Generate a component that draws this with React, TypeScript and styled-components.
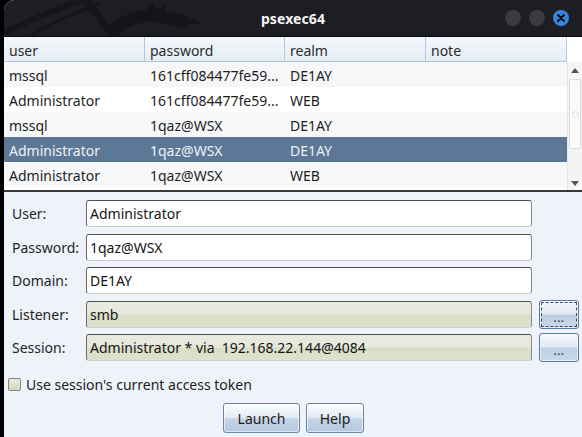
import React from "react";
import styled, { createGlobalStyle } from "styled-components";

const GlobalStyle = createGlobalStyle`
  html, body { margin: 0; padding: 0; background: #000; }
  body { font-family: "Noto Sans", "DejaVu Sans", sans-serif; }
  * { box-sizing: border-box; }
`;

const Screen = styled.div`
  width: 582px;
  height: 437px;
  padding-left: 4px;
  background: #000;
  display: flex;
  overflow: hidden;
`;

const Window = styled.div`
  flex: 1;
  display: flex;
  flex-direction: column;
  background: #eef2f9;
  border-top-left-radius: 10px;
  overflow: hidden;
`;

const TitleBar = styled.div`
  position: relative;
  flex: none;
  height: 37px;
  background: #1d1e23;
  border-bottom: 1px solid #0b0b0d;
  display: grid;
  grid-template-columns: 1fr auto 1fr;
  align-items: center;
`;

const Dragon = styled.svg`
  position: absolute;
  left: 0;
  top: 0;
  width: 220px;
  height: 36px;
`;

const Title = styled.div`
  grid-column: 2;
  position: relative;
  color: #f4f4f4;
  font-weight: 700;
  font-size: 14px;
  letter-spacing: 0.1px;
`;

const Controls = styled.div`
  grid-column: 3;
  justify-self: end;
  display: flex;
  gap: 8px;
  padding-right: 13px;
  position: relative;
`;

const Circle = styled.div<{ $close?: boolean }>`
  width: 16px;
  height: 16px;
  border-radius: 50%;
  background: ${(p) => (p.$close ? "#3584e4" : "#3a3b43")};
  display: flex;
  align-items: center;
  justify-content: center;
`;

const TableArea = styled.div`
  flex: none;
  height: 155px;
  display: flex;
  background: #fff;
  border-bottom: 2px solid #3a3a3c;
`;

const TableMain = styled.div`
  width: 563px;
  display: flex;
  flex-direction: column;
`;

const cols = "141px 140px 141px 141px";

const Header = styled.div`
  display: grid;
  grid-template-columns: ${cols};
  height: 25px;
  background: linear-gradient(#f5f8fc, #e5ecf6);
  border-bottom: 1px solid #b3c4d9;
`;

const HeaderCell = styled.div`
  display: flex;
  align-items: center;
  padding: 2px 0 0 5px;
  font-size: 14px;
  color: #2a2a2a;
  border-right: 1px solid #b4c8e0;
`;

const Row = styled.div<{ $variant: "odd" | "even" | "sel" }>`
  display: grid;
  grid-template-columns: ${cols};
  height: 25px;
  background: ${(p) =>
    p.$variant === "sel" ? "#5d7896" : p.$variant === "odd" ? "#f6f7f9" : "#ffffff"};
  color: ${(p) => (p.$variant === "sel" ? "#eef2f6" : "#1e1e1e")};
`;

const Cell = styled.div`
  display: flex;
  align-items: center;
  padding: 2px 0 0 5px;
  font-size: 14px;
  white-space: nowrap;
  overflow: hidden;
`;

const ScrollCol = styled.div`
  width: 15px;
  display: flex;
  flex-direction: column;
`;

const ScrollCorner = styled.div`
  height: 25px;
  background: #fff;
`;

const Track = styled.div`
  flex: 1;
  display: flex;
  flex-direction: column;
  background: #f3f3f3;
  border-left: 1px solid #e6e6e6;
`;

const Arrow = styled.div<{ $h: number }>`
  height: ${(p) => p.$h}px;
  display: flex;
  align-items: center;
  justify-content: center;
  background: #f6f6f6;
`;

const Thumb = styled.div`
  height: 70px;
  margin: 0 1px;
  background: #fbfbfb;
  border: 1px solid #dcdcdc;
  border-radius: 2px;
  display: flex;
  align-items: center;
  justify-content: center;
`;

const Grip = styled.div`
  width: 7px;
  height: 7px;
  border: 1px solid #e0e0e0;
  border-radius: 50%;
`;

const TrackRest = styled.div`
  flex: 1;
`;

const Form = styled.div`
  flex: 1;
  display: flex;
  flex-direction: column;
  padding: 8px 3px 0 4px;
`;

const FieldGrid = styled.div`
  display: grid;
  grid-template-columns: 78px 446px 47px;
  grid-auto-rows: 27px;
  row-gap: 6.5px;
`;

const Label = styled.div`
  grid-column: 1;
  display: flex;
  align-items: center;
  padding-left: 4px;
  font-size: 14px;
  color: #262626;
`;

const Input = styled.div<{ $olive?: boolean }>`
  grid-column: 2;
  display: flex;
  align-items: center;
  padding-left: 3px;
  font-size: 14px;
  color: #141414;
  white-space: pre;
  border: 1px solid #8a8a8a;
  border-top-color: #4e4e4e;
  border-left-color: #6a6a6a;
  border-bottom-color: #cdcdcd;
  border-radius: 3px;
  background: ${(p) =>
    p.$olive
      ? "linear-gradient(#e9ebe0 0%, #e5e8da 48%, #d9dec6 52%, #dee2cc 100%)"
      : "#ffffff"};
`;

const DotsButton = styled.div<{ $focus?: boolean }>`
  grid-column: 3;
  justify-self: end;
  align-self: center;
  width: 40px;
  height: 29px;
  border: 1px solid #5a7aa1;
  border-radius: 3px;
  background: linear-gradient(#f6f8fb 0%, #e1e9f3 48%, #bccfe5 52%, #cad9ea 100%);
  box-shadow: inset 0 0 0 1px rgba(255, 255, 255, 0.55);
  outline: ${(p) => (p.$focus ? "1px dashed #3b4d66" : "none")};
  outline-offset: -3px;
  display: flex;
  align-items: flex-end;
  justify-content: center;
  padding-bottom: 5px;
  font-size: 11px;
  font-weight: 700;
  color: #3a4656;
  letter-spacing: 0.5px;
  line-height: 1;
`;

const CheckRow = styled.div`
  display: flex;
  align-items: center;
  gap: 5px;
  margin-top: 13px;
  height: 21px;
  font-size: 14px;
  color: #222;
`;

const CheckBox = styled.div`
  width: 13px;
  height: 13px;
  border: 1px solid #85877a;
  border-radius: 2px;
  background: linear-gradient(#e8eadb, #d3d8bd);
`;

const ButtonRow = styled.div`
  display: flex;
  justify-content: center;
  gap: 6px;
  margin-top: 8px;
`;

const PushButton = styled.div<{ $w: number }>`
  width: ${(p) => p.$w}px;
  height: 30px;
  border: 1px solid #6b86a6;
  border-radius: 3px;
  background: linear-gradient(#fbfcfe 0%, #e5ecf4 46%, #c4d4e6 54%, #b4c8de 100%);
  box-shadow: inset 0 0 0 1px rgba(255, 255, 255, 0.55);
  display: flex;
  align-items: center;
  justify-content: center;
  font-size: 14px;
  color: #1c1c1c;
`;

const rows: { user: string; password: string; realm: string; v: "odd" | "even" | "sel" }[] = [
  { user: "mssql", password: "161cff084477fe59...", realm: "DE1AY", v: "odd" },
  { user: "Administrator", password: "161cff084477fe59...", realm: "WEB", v: "even" },
  { user: "mssql", password: "1qaz@WSX", realm: "DE1AY", v: "odd" },
  { user: "Administrator", password: "1qaz@WSX", realm: "DE1AY", v: "sel" },
  { user: "Administrator", password: "1qaz@WSX", realm: "WEB", v: "odd" },
];

export default function App() {
  return (
    <>
      <GlobalStyle />
      <Screen>
        <Window>
          <TitleBar>
            <Dragon viewBox="0 0 220 36">
              <g fill="none" stroke="#15161a" strokeLinecap="round">
                <path d="M0 33 Q38 14 84 -2" strokeWidth="6" />
                <path d="M20 40 Q55 18 95 4" strokeWidth="3" />
                <path d="M80 -2 Q96 18 112 40" strokeWidth="7" />
              </g>
              <g fill="#141519">
                <path d="M100 30 Q118 12 142 10 L150 2 L152 9 L162 4 L162 11 L178 14 L200 25 L186 24 L178 29 L166 25 L146 21 Q124 24 112 38 Z" />
              </g>
            </Dragon>
            <Title>psexec64</Title>
            <Controls>
              <Circle />
              <Circle />
              <Circle $close>
                <svg width="8" height="8" viewBox="0 0 8 8">
                  <path d="M1 1 L7 7 M7 1 L1 7" stroke="#0b0b0b" strokeWidth="2" strokeLinecap="round" />
                </svg>
              </Circle>
            </Controls>
          </TitleBar>

          <TableArea>
            <TableMain>
              <Header>
                <HeaderCell>user</HeaderCell>
                <HeaderCell>password</HeaderCell>
                <HeaderCell>realm</HeaderCell>
                <HeaderCell>note</HeaderCell>
              </Header>
              {rows.map((r, i) => (
                <Row key={i} $variant={r.v}>
                  <Cell>{r.user}</Cell>
                  <Cell>{r.password}</Cell>
                  <Cell>{r.realm}</Cell>
                  <Cell />
                </Row>
              ))}
            </TableMain>
            <ScrollCol>
              <ScrollCorner />
              <Track>
                <Arrow $h={17}>
                  <svg width="8" height="5" viewBox="0 0 8 5">
                    <path d="M0 5 L4 0 L8 5 Z" fill="#555" />
                  </svg>
                </Arrow>
                <Thumb>
                  <Grip />
                </Thumb>
                <TrackRest />
                <Arrow $h={14}>
                  <svg width="8" height="5" viewBox="0 0 8 5">
                    <path d="M0 0 L4 5 L8 0 Z" fill="#555" />
                  </svg>
                </Arrow>
              </Track>
            </ScrollCol>
          </TableArea>

          <Form>
            <FieldGrid>
              <Label>User:</Label>
              <Input>Administrator</Input>
              <Label>Password:</Label>
              <Input>1qaz@WSX</Input>
              <Label>Domain:</Label>
              <Input>DE1AY</Input>
              <Label>Listener:</Label>
              <Input $olive>smb</Input>
              <DotsButton $focus>...</DotsButton>
              <Label>Session:</Label>
              <Input $olive>Administrator * via  192.168.22.144@4084</Input>
              <DotsButton>...</DotsButton>
            </FieldGrid>
            <CheckRow>
              <CheckBox />
              <span>Use session's current access token</span>
            </CheckRow>
            <ButtonRow>
              <PushButton $w={77}>Launch</PushButton>
              <PushButton $w={58}>Help</PushButton>
            </ButtonRow>
          </Form>
        </Window>
      </Screen>
    </>
  );
}
